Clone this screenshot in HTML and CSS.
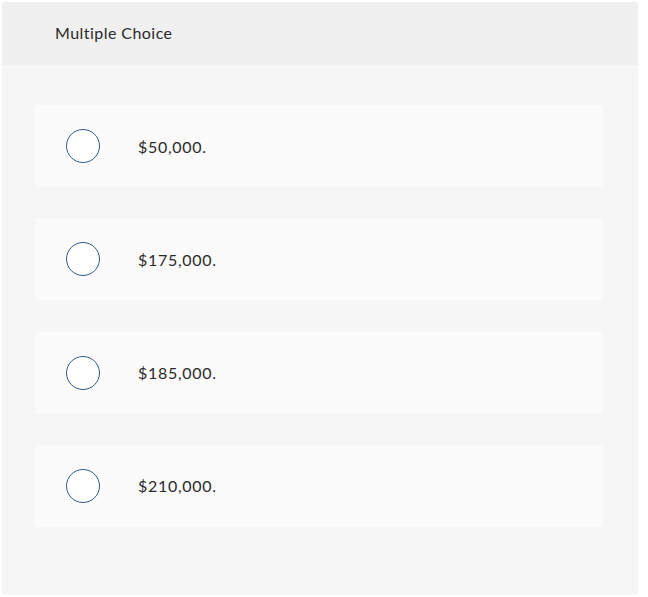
FILE: index.html
```html
<!DOCTYPE html>
<html>
<head>
<meta charset="utf-8">
<link rel="stylesheet" href="styles.css">
</head>
<body>
<div class="panel">
  <div class="header">Multiple Choice</div>
  <div class="choices">
    <div class="card"><span class="radio"></span><span class="label">$50,000.</span></div>
    <div class="card"><span class="radio"></span><span class="label">$175,000.</span></div>
    <div class="card"><span class="radio"></span><span class="label">$185,000.</span></div>
    <div class="card"><span class="radio"></span><span class="label">$210,000.</span></div>
  </div>
</div>
</body>
</html>
```
FILE: styles.css
```css
html, body { margin: 0; padding: 0; background: #fff; }
body { font-family: Lato, "Open Sans", sans-serif; color: #2a2a2a; }
.panel {
  margin: 2px 0 0 2px;
  width: 636px;
  height: 593px;
  background: #f6f6f6;
  border-radius: 3px;
  overflow: hidden;
}
.header {
  height: 63px;
  background: #f0f0f0;
  box-sizing: border-box;
  padding: 21px 0 0 53px;
  font-size: 16px;
  line-height: 20px;
  letter-spacing: 0.45px;
  color: #2a2a2a;
}
.choices {
  padding: 40px 35px 0 33px;
  display: flex;
  flex-direction: column;
  gap: 31.3px;
}
.card {
  height: 82px;
  background: #fbfbfb;
  border-radius: 3px;
  display: flex;
  align-items: center;
  padding-left: 31px;
  box-sizing: border-box;
}
.radio {
  width: 32px;
  height: 32px;
  border: 1.5px solid #2f5b8a;
  border-radius: 50%;
  background: #fff;
  flex: none;
}
.label {
  margin-left: 38px;
  font-size: 16px;
  letter-spacing: 0.7px;
  color: #2a2a2a;
}
```
